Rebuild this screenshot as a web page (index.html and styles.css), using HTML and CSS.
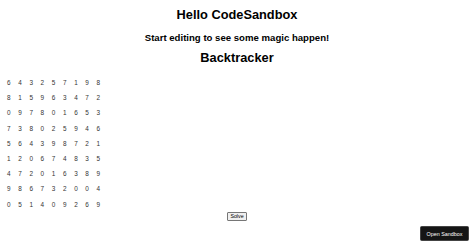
FILE: index.html
```html
<!DOCTYPE html>
<html>
<head>
<meta charset="utf-8">
<link rel="stylesheet" href="styles.css">
</head>
<body>
<div class="app">
  <h1 class="title title-first">Hello CodeSandbox</h1>
  <h2 class="subtitle">Start editing to see some magic happen!</h2>
  <h1 class="title">Backtracker</h1>
  <div class="board">
    <span>6</span><span>4</span><span>3</span><span>2</span><span>5</span><span>7</span><span>1</span><span>9</span><span>8</span>
    <span>8</span><span>1</span><span>5</span><span>9</span><span>6</span><span>3</span><span>4</span><span>7</span><span>2</span>
    <span>0</span><span>9</span><span>7</span><span>8</span><span>0</span><span>1</span><span>6</span><span>5</span><span>3</span>
    <span>7</span><span>3</span><span>8</span><span>0</span><span>2</span><span>5</span><span>9</span><span>4</span><span>6</span>
    <span>5</span><span>6</span><span>4</span><span>3</span><span>9</span><span>8</span><span>7</span><span>2</span><span>1</span>
    <span>1</span><span>2</span><span>0</span><span>6</span><span>7</span><span>4</span><span>8</span><span>3</span><span>5</span>
    <span>4</span><span>7</span><span>2</span><span>0</span><span>1</span><span>6</span><span>3</span><span>8</span><span>9</span>
    <span>9</span><span>8</span><span>6</span><span>7</span><span>3</span><span>2</span><span>0</span><span>0</span><span>4</span>
    <span>0</span><span>5</span><span>1</span><span>4</span><span>0</span><span>9</span><span>2</span><span>6</span><span>9</span>
  </div>
  <div class="actions">
    <button class="solve">Solve</button>
  </div>
</div>
<a class="open-sandbox">Open Sandbox</a>
</body>
</html>
```

FILE: styles.css
```css
html, body {
  background: #fff;
}
body {
  margin: 0 3.2px 3.2px;
  font-family: "Liberation Sans", Arial, sans-serif;
  color: #000;
}
.app {
  text-align: center;
  padding-top: 0.1px;
}
.title {
  font-size: 12.8px;
  font-weight: bold;
  margin: 8.6px 0;
  line-height: 14.7px;
}
.title-first {
  margin-top: 8.3px;
}
.subtitle {
  font-size: 9.6px;
  font-weight: bold;
  margin: 8px 0;
  line-height: 11px;
}
.board {
  display: grid;
  grid-template-columns: repeat(9, 11.2px);
  grid-auto-rows: 15.2px;
  align-items: center;
  justify-items: center;
  font-size: 6.4px;
  color: #333;
  margin-top: 9px;
}
.actions {
  display: flex;
  justify-content: center;
}
.solve {
  font-family: "Liberation Sans", Arial, sans-serif;
  font-size: 5.3px;
  line-height: 6px;
  padding: 0.6px 2.4px;
  border: 0.8px solid #767676;
  border-radius: 1px;
  background: #efefef;
  color: #000;
}
.open-sandbox {
  position: fixed;
  right: 5px;
  bottom: 7px;
  width: 49px;
  height: 15px;
  display: flex;
  align-items: center;
  justify-content: center;
  background: #151515;
  color: #fff;
  font-size: 5.4px;
  border-radius: 1.6px;
  border: 0.5px solid #444;
  box-sizing: border-box;
}
```
